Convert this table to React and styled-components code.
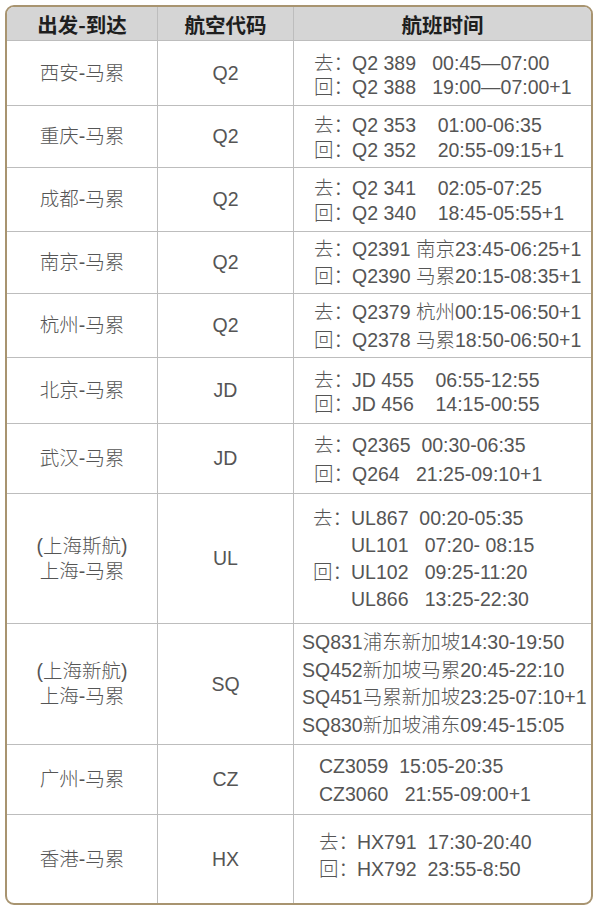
import React from "react";
import styled, { createGlobalStyle } from "styled-components";

const Global = createGlobalStyle`
  html, body { margin: 0; padding: 0; background: #ffffff; }
  body { font-family: "Liberation Sans", "Noto Sans CJK SC", sans-serif; }
`;

const Frame = styled.div`
  margin: 5px 0 0 5px;
  width: 588px;
  box-sizing: border-box;
  border: 2px solid #a89470;
  border-radius: 9px;
  overflow: hidden;
  background: #fff;
  display: grid;
  grid-template-columns: 151px 136px 1fr;
`;

const HeadCell = styled.div`
  height: 33px;
  box-sizing: border-box;
  background: #d5d5d5;
  display: flex;
  align-items: center;
  justify-content: center;
  font-family: "Noto Sans CJK SC", sans-serif;
  font-weight: 700;
  font-size: 20.5px;
  color: #1e1e1e;
  border-right: ${(p) => (p.$last ? "none" : "1px solid #bdbdbd")};
`;

const Cell = styled.div`
  height: ${(p) => p.$h}px;
  box-sizing: border-box;
  border-top: 1px solid #bdbdbd;
  border-right: ${(p) => (p.$last ? "none" : "1px solid #bdbdbd")};
  display: flex;
  flex-direction: column;
  justify-content: center;
  align-items: ${(p) => (p.$left ? "flex-start" : "center")};
  padding-left: ${(p) => p.$pl || 0}px;
  padding-top: ${(p) => p.$pt || 0}px;
  padding-bottom: ${(p) => p.$pb || 0}px;
  color: #555555;
  font-size: 19.5px;
  font-weight: 300;
  text-align: center;
`;

const Line = styled.div`
  line-height: ${(p) => p.$lh}px;
  white-space: pre;
`;

const Label = styled.span`
  display: inline-block;
  width: 1.95em;
`;

const rows = [
  { h: 65, route: ["西安-马累"], code: "Q2", pl: 20, lh: 24, pt: 4, lines: [["去：", "Q2 389   00:45—07:00"], ["回：", "Q2 388   19:00—07:00+1"]] },
  { h: 62, route: ["重庆-马累"], code: "Q2", pl: 20, lh: 25, pt: 2, lines: [["去：", "Q2 353    01:00-06:35"], ["回：", "Q2 352    20:55-09:15+1"]] },
  { h: 64, route: ["成都-马累"], code: "Q2", pl: 20, lh: 25, pt: 2, lines: [["去：", "Q2 341    02:05-07:25"], ["回：", "Q2 340    18:45-05:55+1"]] },
  { h: 62, route: ["南京-马累"], code: "Q2", pl: 20, lh: 27, pt: 1, lines: [["去：", "Q2391 南京23:45-06:25+1"], ["回：", "Q2390 马累20:15-08:35+1"]] },
  { h: 64, route: ["杭州-马累"], code: "Q2", pl: 20, lh: 28, pt: 1, lines: [["去：", "Q2379 杭州00:15-06:50+1"], ["回：", "Q2378 马累18:50-06:50+1"]] },
  { h: 66, route: ["北京-马累"], code: "JD", pl: 20, lh: 24, pt: 2, lines: [["去：", "JD 455    06:55-12:55"], ["回：", "JD 456    14:15-00:55"]] },
  { h: 70, route: ["武汉-马累"], code: "JD", pl: 20, lh: 29, pt: 2, lines: [["去：", "Q2365  00:30-06:35"], ["回：", "Q264   21:25-09:10+1"]] },
  { h: 130, route: ["(上海斯航)", "上海-马累"], code: "UL", pl: 19, lh: 27, pt: 0, lines: [["去：", "UL867  00:20-05:35"], ["", "UL101   07:20- 08:15"], ["回：", "UL102   09:25-11:20"], ["", "UL866   13:25-22:30"]] },
  { h: 121, route: ["(上海新航)", "上海-马累"], code: "SQ", pl: 8, lh: 27.5, pt: 0, lines: [[null, "SQ831浦东新加坡14:30-19:50"], [null, "SQ452新加坡马累20:45-22:10"], [null, "SQ451马累新加坡23:25-07:10+1"], [null, "SQ830新加坡浦东09:45-15:05"]] },
  { h: 70, route: ["广州-马累"], code: "CZ", pl: 25, lh: 28, pt: 0, lines: [[null, "CZ3059  15:05-20:35"], [null, "CZ3060   21:55-09:00+1"]] },
  { h: 89, route: ["香港-马累"], code: "HX", pl: 25, lh: 27, pt: 0, pb: 6, lines: [["去：", "HX791  17:30-20:40"], ["回：", "HX792  23:55-8:50"]] },
];

export default function App() {
  return (
    <>
      <Global />
      <Frame>
        <HeadCell>出发-到达</HeadCell>
        <HeadCell>航空代码</HeadCell>
        <HeadCell $last>航班时间</HeadCell>
        {rows.map((r, i) => (
          <React.Fragment key={i}>
            <Cell $h={r.h}>
              {r.route.map((t, j) => (
                <Line key={j} $lh={25}>{t}</Line>
              ))}
            </Cell>
            <Cell $h={r.h}>
              <Line $lh={25}>{r.code}</Line>
            </Cell>
            <Cell $h={r.h} $last $left $pl={r.pl} $pt={r.pt} $pb={r.pb}>
              {r.lines.map(([label, text], j) => (
                <Line key={j} $lh={r.lh}>
                  {label !== null && <Label>{label}</Label>}
                  {text}
                </Line>
              ))}
            </Cell>
          </React.Fragment>
        ))}
      </Frame>
    </>
  );
}
